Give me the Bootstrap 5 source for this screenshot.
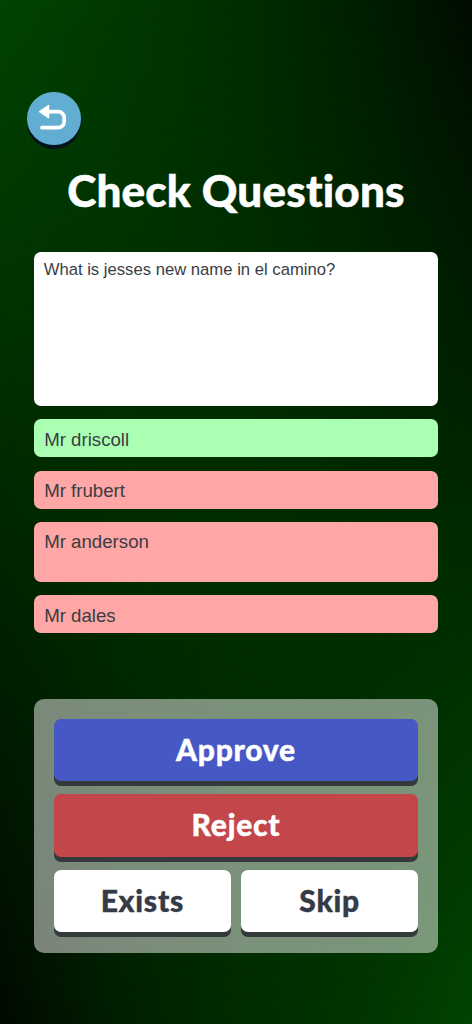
<!DOCTYPE html>
<html lang="en">
<head>
<meta charset="utf-8">
<meta name="viewport" content="width=device-width, initial-scale=1">
<link href="https://cdn.jsdelivr.net/npm/bootstrap@5.3.0/dist/css/bootstrap.min.css" rel="stylesheet">
<style>
html, body { height: 100%; }
body {
  margin: 0; min-height: 1024px; overflow: hidden; position: relative;
  background: linear-gradient(to right, #000a00 0%, #001f00 25%, #002c00 50%, #003400 75%, #004400 100%);
  font-family: "Liberation Sans", Arial, sans-serif; color: #3a3d42;
}
body::before {
  content: ""; position: absolute; inset: 0;
  background: linear-gradient(to right, #004400 0%, #002e00 50%, #002000 75%, #000c00 100%);
  -webkit-mask-image: linear-gradient(to bottom, #000, transparent);
  mask-image: linear-gradient(to bottom, #000, transparent);
}
.page-wrap { position: relative; padding: 92px 33.67px 0; }
.back-btn {
  display: block; width: 53.33px; height: 53.33px; margin-left: -6.33px; border: 0; padding: 0; border-radius: 50%;
  background: #62aed3; box-shadow: 0 4px 0 #05141c;
}
.back-btn svg { display: block; }
.page-title {
  font-family: "Lato", "Noto Sans", sans-serif; font-weight: 900; font-size: 44px; line-height: 60px;
  color: #fff; text-align: center; margin: 15px 0 31.67px; font-variant-ligatures: none;
  letter-spacing: .2px; -webkit-text-stroke: .5px #fff;
}
.q-box {
  background: #fff; height: 154px; border-radius: 7px; padding: 7px 10px;
  font-size: 16.67px; line-height: 21px; margin-bottom: 13.33px;
}
.opt-box {
  height: 38px; border-radius: 7px; padding: 9.5px 10.5px 0; font-size: 18.67px; line-height: 22px; margin-bottom: 13.33px;
}
.opt-tall { height: 60px; }
.opt-right { background: #aaffb2; }
.opt-wrong { background: #ffa6a6; }
.action-panel {
  margin-top: 65.33px; height: 254px; padding: 20px; border-radius: 10px; background: rgba(255,255,255,.48);
}
.act-btn {
  height: 62.33px; border: 0; border-radius: 7px; width: 100%; padding: 0 0 2px;
  font-family: "Lato", "Noto Sans", sans-serif; font-weight: 900; font-size: 30px; line-height: 1;
  font-variant-ligatures: none; letter-spacing: .75px; -webkit-text-stroke: .4px currentColor;
  box-shadow: 0 5px 0 #343a3c;
}
.act-blue { background: #4558c4; color: #fff; }
.act-red { background: #c2464a; color: #fff; }
.act-white { background: #fff; color: #343a46; }
.act-stack { gap: 13.33px; }
.act-row { gap: 10px; }
</style>
</head>
<body>
<div class="page-wrap">
  <button class="back-btn" aria-label="Back">
    <svg width="53.33" height="53.33" viewBox="0 0 53.33 53.33" fill="none">
      <path d="M12.6 19.6 L21.6 13.6 V25.6 Z" fill="#fff" stroke="#fff" stroke-width="1.4" stroke-linejoin="round"/>
      <path d="M20 19.6 H31 A6.2 6.2 0 0 1 37.2 25.8 V29.5 A6.2 6.2 0 0 1 31 35.7 H15" stroke="#fff" stroke-width="3.7" stroke-linecap="round"/>
    </svg>
  </button>
  <h1 class="page-title">Check Questions</h1>
  <div class="q-box">What is jesses new name in el camino?</div>
  <div class="opt-box opt-right">Mr driscoll</div>
  <div class="opt-box opt-wrong">Mr frubert</div>
  <div class="opt-box opt-tall opt-wrong">Mr anderson</div>
  <div class="opt-box opt-wrong">Mr dales</div>
  <div class="action-panel d-flex flex-column act-stack">
    <button class="act-btn act-blue">Approve</button>
    <button class="act-btn act-red">Reject</button>
    <div class="d-flex act-row">
      <button class="act-btn act-white">Exists</button>
      <button class="act-btn act-white">Skip</button>
    </div>
  </div>
</div>
<script src="https://cdn.jsdelivr.net/npm/bootstrap@5.3.0/dist/js/bootstrap.bundle.min.js"></script>
</body>
</html>
